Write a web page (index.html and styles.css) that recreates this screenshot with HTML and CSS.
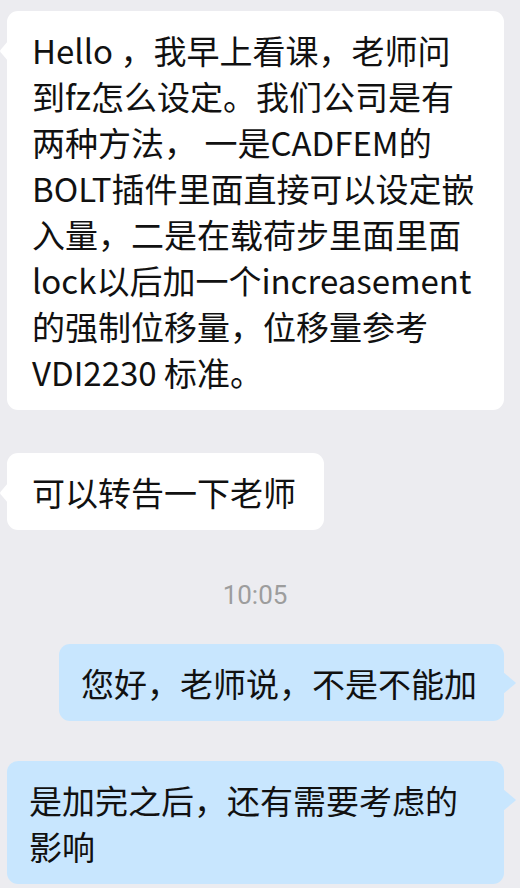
FILE: index.html
```html
<!DOCTYPE html>
<html lang="zh-CN">
<head>
<meta charset="utf-8">
<title>Chat</title>
<link rel="stylesheet" href="styles.css">
</head>
<body>
<div class="chat">
  <div class="msg left first">Hello ，我早上看课，老师问到fz怎么设定。我们公司是有两种方法， 一是CADFEM的BOLT插件里面直接可以设定嵌入量，二是在载荷步里面里面lock以后加一个increasement的强制位移量，位移量参考VDI2230 标准。</div>
  <div class="msg left second">可以转告一下老师</div>
  <div class="time">10:05</div>
  <div class="msg right third">您好，老师说，不是不能加</div>
  <div class="msg right fourth">是加完之后，还有需要考虑的影响</div>
</div>
</body>
</html>
```

FILE: styles.css
```css
html, body {
  margin: 0;
  padding: 0;
  background: #ececf0;
}
body {
  width: 520px;
  height: 888px;
  overflow: hidden;
  font-family: "Noto Sans CJK SC", "Noto Sans", sans-serif;
  color: #111111;
}
.chat {
  display: flex;
  flex-direction: column;
  padding-top: 11px;
}
.msg {
  position: relative;
  box-sizing: border-box;
  max-width: 497px;
  font-size: 33px;
  line-height: 46px;
  border-radius: 11px;
  padding-top: 16px;
  padding-bottom: 15px;
  word-break: normal;
}
.left {
  align-self: flex-start;
  margin-left: 7px;
  background: #ffffff;
  padding-left: 25px;
  padding-right: 28px;
}
.right {
  align-self: flex-end;
  margin-right: 16px;
  background: #c8e6fe;
  padding-left: 22px;
  padding-right: 27px;
}
.left::before {
  content: "";
  position: absolute;
  left: -7px;
  top: 30px;
  width: 8px;
  height: 20px;
  background: #ffffff;
  clip-path: polygon(100% 0, 8% 44%, 0 50%, 8% 56%, 100% 100%);
}
.right::after {
  content: "";
  position: absolute;
  right: -12px;
  top: 28px;
  width: 13px;
  height: 22px;
  background: #c8e6fe;
  clip-path: polygon(0 0, 90% 44%, 100% 50%, 90% 56%, 0 100%);
}
.second {
  margin-top: 43px;
}
.time {
  align-self: center;
  margin-top: 47px;
  margin-bottom: 31px;
  margin-right: 10px;
  font-family: "Roboto", "Noto Sans", sans-serif;
  font-size: 26px;
  line-height: 36px;
  color: #9d9d9d;
}
.fourth {
  margin-top: 40px;
  align-self: flex-start;
  margin-left: 7px;
}
```
